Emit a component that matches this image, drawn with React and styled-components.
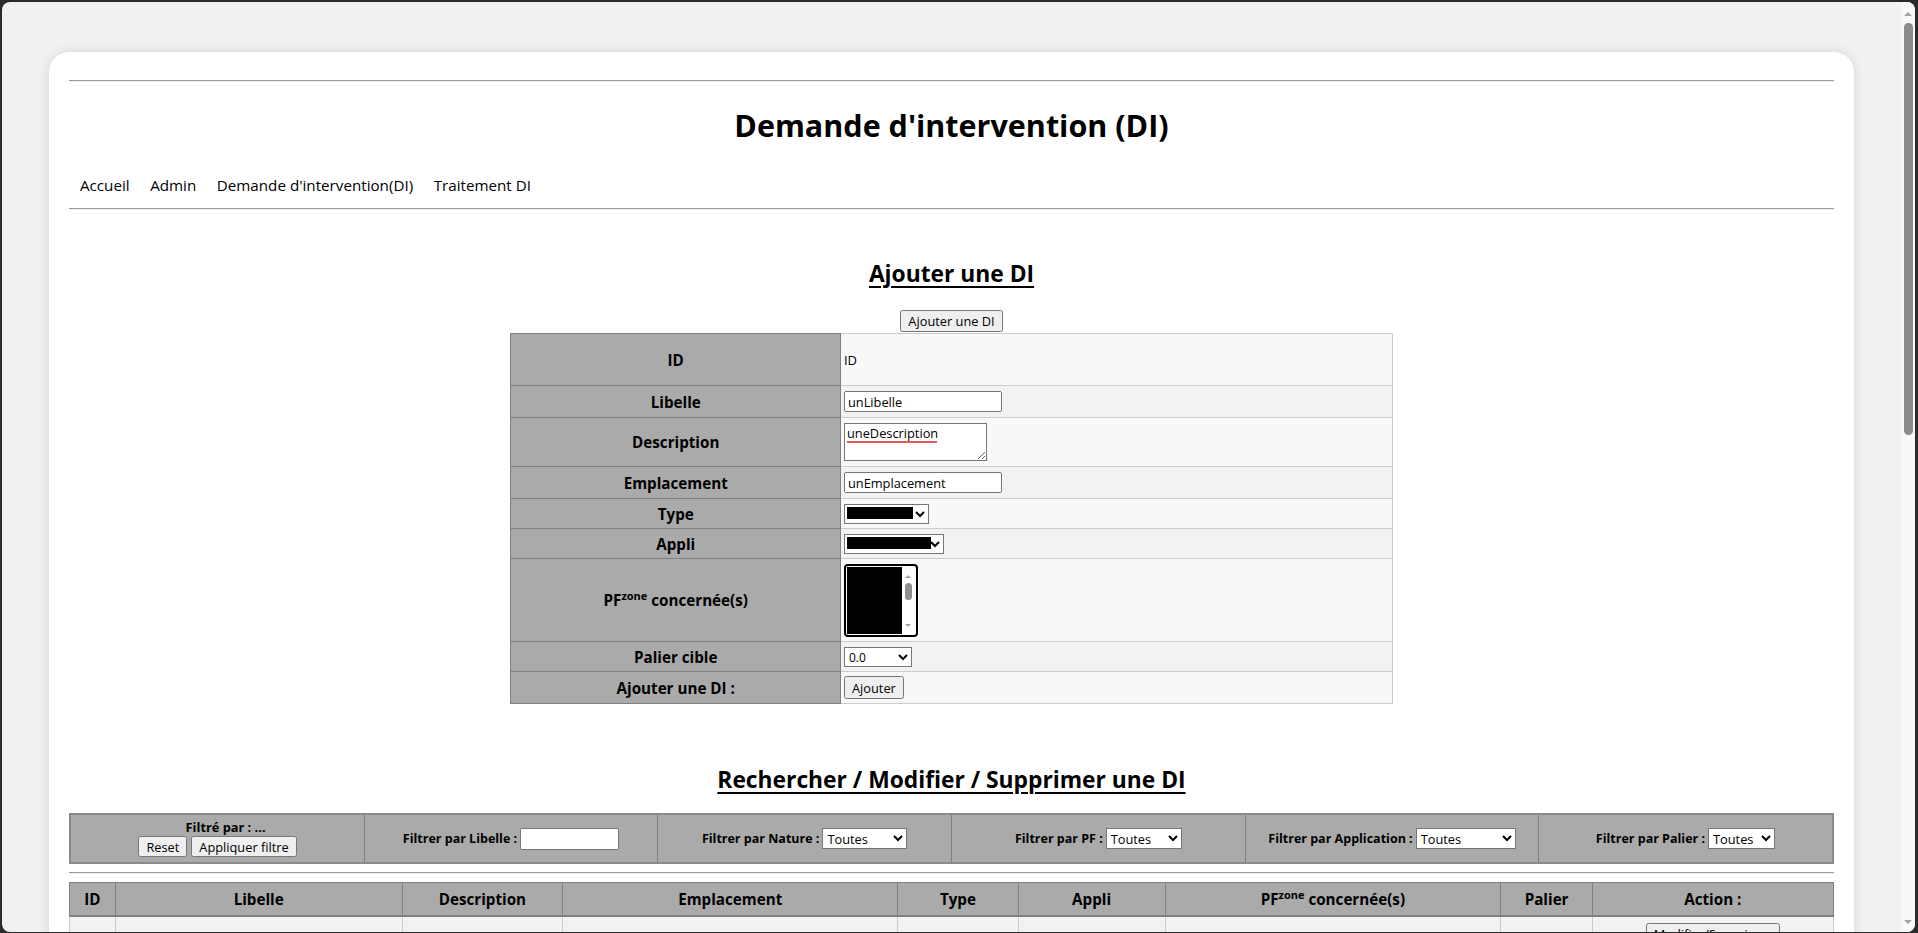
import React from "react";
import styled, { createGlobalStyle } from "styled-components";

const GlobalStyle = createGlobalStyle`
  html, body { margin: 0; padding: 0; height: 100%; overflow: hidden; background: #2b2b2b; }
  #root { height: 100%; }
  * { box-sizing: border-box; }
`;

const FONT = `"Open Sans", "Noto Sans", sans-serif`;

const Frame = styled.div`
  display: flex;
  height: 933px;
  padding: 2px 3px 1px 2px;
  background: #2b2b2b;
`;

const Window = styled.div`
  flex: 1;
  display: flex;
  border-radius: 8px;
  overflow: hidden;
  background: #f1f1f1;
`;

const Viewport = styled.main`
  flex: 1;
  min-width: 0;
  overflow: hidden;
  font-family: ${FONT};
  color: #000;
`;

/* page scrollbar (drawn, since the capture hides native scrollbars) */
const ScrollBar = styled.div`
  width: 14px;
  flex: none;
  display: flex;
  flex-direction: column;
  align-items: center;
  background: #f8f8f8;
`;

const Arrow = styled.div`
  flex: none;
  width: 0;
  height: 0;
  margin: ${(p) => p.$m};
  border-left: ${(p) => p.$s}px solid transparent;
  border-right: ${(p) => p.$s}px solid transparent;
  ${(p) =>
    p.$down
      ? `border-top: ${p.$s}px solid ${p.$c};`
      : `border-bottom: ${p.$s}px solid ${p.$c};`}
`;

const Track = styled.div`
  flex: 1;
  align-self: stretch;
  display: flex;
  justify-content: center;
  padding-top: ${(p) => p.$pt}px;
`;

const Thumb = styled.div`
  width: ${(p) => p.$w}px;
  height: ${(p) => p.$h}px;
  border-radius: ${(p) => p.$w}px;
  background: ${(p) => p.$c};
  margin-left: ${(p) => p.$ml || 0}px;
`;

const Card = styled.div`
  width: 95%;
  margin: 50px auto 50px;
  background: #fff;
  border-radius: 20px;
  box-shadow: 0 0 12px rgba(0, 0, 0, 0.12);
  padding: 28px 20px 30px;
`;

const Rule = styled.hr`
  margin: ${(p) => p.$m || "0"};
  height: 0;
  border: 0;
  border-top: 1px solid #9a9a9a;
  border-bottom: 1px solid #eeeeee;
`;

const Title = styled.h1`
  margin: 23px 0 0;
  font-size: 30.5px;
  line-height: 40px;
  font-weight: 700;
  text-align: center;
`;

const Nav = styled.nav`
  display: flex;
  margin-top: 30px;
  margin-bottom: 13px;
  line-height: 20px;
`;

const NavLink = styled.a`
  padding: 0 10px 0 10.5px;
  font-size: 15.2px;
  color: #000;
  text-decoration: none;
`;

const SectionTitle = styled.h2`
  margin: ${(p) => p.$top}px 0 0;
  font-size: 22.8px;
  line-height: 30px;
  font-weight: 700;
  text-align: center;
  text-decoration: underline;
  text-decoration-thickness: 2px;
  text-underline-offset: 4px;
`;

const Centered = styled.div`
  display: flex;
  justify-content: center;
  margin-top: 21px;
`;

const Button = styled.button`
  font-family: ${FONT};
  font-size: 12.8px;
  height: ${(p) => p.$h || 22}px;
  padding: 0 6px;
  color: #000;
`;

const FormTable = styled.table`
  width: 50%;
  margin: 1px auto 0;
  border-collapse: collapse;
  font-family: ${FONT};
`;

const FormRow = styled.tr`
  height: ${(p) => p.$h}px;
  &:nth-child(odd) td { background: #f8f8f8; }
  &:nth-child(even) td { background: #f2f2f2; }
`;

const LabelCell = styled.th`
  width: 37.4%;
  background: #aaaaaa;
  border: 1px solid #808080;
  font-size: 15.2px;
  font-weight: 700;
  text-align: center;
  vertical-align: middle;
  padding: 0 4px;
`;

const ValueCell = styled.td`
  border: 1px solid #cccccc;
  padding: 2px 3px;
  font-size: 13px;
  text-align: left;
  vertical-align: middle;
`;

const TextInput = styled.input`
  font-family: ${FONT};
  font-size: 12.8px;
  width: ${(p) => p.$w}px;
  height: ${(p) => p.$h || 21}px;
  padding: 1px 2px;
  vertical-align: middle;
`;

const TextArea = styled.textarea`
  display: block;
  font-family: ${FONT};
  font-size: 12.8px;
  line-height: 17px;
  width: 143px;
  height: 38px;
  padding: 1px 2px;
  background-color: #fff;
  background-image: linear-gradient(#e35a5a, #e35a5a);
  background-repeat: no-repeat;
  background-size: 90px 2px;
  background-position: 2px 17px;
`;

const Select = styled.select`
  font-family: ${FONT};
  font-size: ${(p) => p.$fs || 12.8}px;
  width: ${(p) => p.$w}px;
  height: ${(p) => p.$h || 20}px;
  vertical-align: middle;
  color: #000;
  background-color: #fff;
  ${(p) =>
    p.$black
      ? `
    background-image: linear-gradient(#000, #000);
    background-repeat: no-repeat;
    background-size: ${p.$black}px calc(100% - 6px);
    background-position: 2px 2px;
  `
      : ""}
`;

/* multi-select list box */
const ListBox = styled.div`
  display: flex;
  width: 74px;
  height: 73px;
  border: 2px solid #000;
  border-radius: 4px;
  background: #fff;
  padding: 1px;
`;

const ListItems = styled.div`
  flex: 1;
  background: #000;
`;

const ListScroll = styled.div`
  width: 13px;
  display: flex;
  flex-direction: column;
  align-items: center;
  background: #fff;
`;

const Sup = styled.sup`
  font-size: 11px;
  line-height: 0;
`;

const FilterTable = styled.table`
  width: 100%;
  margin-top: 18px;
  border-collapse: collapse;
  table-layout: fixed;
  border: 2px solid #8a8a8a;
`;

const FilterCell = styled.td`
  height: 49px;
  background: #aaaaaa;
  border: 1px solid #808080;
  text-align: center;
  vertical-align: middle;
  padding: 0 4px;
  font-size: 12.5px;
`;

const FilterLabel = styled.span`
  font-weight: 700;
  font-size: 12.5px;
  margin-right: 3px;
  vertical-align: middle;
`;

const FilterHint = styled.div`
  font-weight: 700;
  font-size: 12.8px;
  line-height: 14px;
  margin-bottom: 2px;
  padding-left: 16px;
`;

const ButtonRow = styled.div`
  display: flex;
  justify-content: center;
  gap: 4px;
`;

const ResultTable = styled.table`
  width: 100%;
  border-collapse: collapse;
  table-layout: fixed;
`;

const HeadCell = styled.th`
  width: ${(p) => p.$w}px;
  height: 33px;
  background: #aaaaaa;
  border: 1px solid #808080;
  border-bottom: 2px solid #808080;
  font-size: 15.2px;
  font-weight: 700;
  text-align: center;
  vertical-align: middle;
  padding: 0 4px;
`;

const DataRow = styled.tr`
  background: ${(p) => (p.$odd ? "#f8f8f8" : "#f2f2f2")};
`;

const DataCell = styled.td`
  border: 1px solid #cccccc;
  height: 33px;
  padding: 5px 4px;
  text-align: center;
  vertical-align: top;
`;

const columns = [
  ["ID", 45],
  ["Libelle", 287],
  ["Description", 160],
  ["Emplacement", 335],
  ["Type", 120],
  ["Appli", 147],
  ["PF", 335],
  ["Palier", 92],
  ["Action :", 240],
];

export default function App() {
  const rows = Array.from({ length: 30 }, (_, i) => i);
  return (
    <>
      <GlobalStyle />
      <Frame>
        <Window>
          <Viewport>
            <Card>
              <Rule />
              <Title>Demande d'intervention (DI)</Title>
              <Nav>
                <NavLink href="#">Accueil</NavLink>
                <NavLink href="#">Admin</NavLink>
                <NavLink href="#">Demande d'intervention(DI)</NavLink>
                <NavLink href="#">Traitement DI</NavLink>
              </Nav>
              <Rule />

              <SectionTitle $top={49}>Ajouter une DI</SectionTitle>
              <Centered>
                <Button>Ajouter une DI</Button>
              </Centered>
              <FormTable>
                <tbody>
                  <FormRow $h={52}>
                    <LabelCell>ID</LabelCell>
                    <ValueCell>ID</ValueCell>
                  </FormRow>
                  <FormRow $h={32}>
                    <LabelCell>Libelle</LabelCell>
                    <ValueCell>
                      <TextInput $w={158} defaultValue="unLibelle" />
                    </ValueCell>
                  </FormRow>
                  <FormRow $h={49}>
                    <LabelCell>Description</LabelCell>
                    <ValueCell>
                      <TextArea defaultValue="uneDescription" spellCheck={false} />
                    </ValueCell>
                  </FormRow>
                  <FormRow $h={32}>
                    <LabelCell>Emplacement</LabelCell>
                    <ValueCell>
                      <TextInput $w={158} defaultValue="unEmplacement" />
                    </ValueCell>
                  </FormRow>
                  <FormRow $h={30}>
                    <LabelCell>Type</LabelCell>
                    <ValueCell>
                      <Select $w={85} $black={66}>
                        <option value=""></option>
                      </Select>
                    </ValueCell>
                  </FormRow>
                  <FormRow $h={30}>
                    <LabelCell>Appli</LabelCell>
                    <ValueCell>
                      <Select $w={100} $black={84}>
                        <option value=""></option>
                      </Select>
                    </ValueCell>
                  </FormRow>
                  <FormRow $h={83}>
                    <LabelCell>
                      PF<Sup>zone</Sup> concernée(s)
                    </LabelCell>
                    <ValueCell>
                      <ListBox role="listbox" aria-multiselectable="true">
                        <ListItems />
                        <ListScroll>
                          <Arrow $s={3.5} $c="#a3a3a3" $m="8px 0 0" />
                          <Track $pt={5}>
                            <Thumb $w={7} $h={17} $c="#8f8f8f" />
                          </Track>
                          <Arrow $down $s={3.5} $c="#a3a3a3" $m="0 0 7px" />
                        </ListScroll>
                      </ListBox>
                    </ValueCell>
                  </FormRow>
                  <FormRow $h={30}>
                    <LabelCell>Palier cible</LabelCell>
                    <ValueCell>
                      <Select $w={68} $fs={12}>
                        <option>0.0</option>
                      </Select>
                    </ValueCell>
                  </FormRow>
                  <FormRow $h={32}>
                    <LabelCell>Ajouter une DI :</LabelCell>
                    <ValueCell>
                      <Button $h={23}>Ajouter</Button>
                    </ValueCell>
                  </FormRow>
                </tbody>
              </FormTable>

              <SectionTitle $top={61}>Rechercher / Modifier / Supprimer une DI</SectionTitle>
              <FilterTable>
                <tbody>
                  <tr>
                    <FilterCell>
                      <FilterHint>Filtré par : ...</FilterHint>
                      <ButtonRow>
                        <Button $h={21}>Reset</Button>
                        <Button $h={21}>Appliquer filtre</Button>
                      </ButtonRow>
                    </FilterCell>
                    <FilterCell>
                      <FilterLabel>Filtrer par Libelle :</FilterLabel>
                      <TextInput $w={99} $h={22} />
                    </FilterCell>
                    <FilterCell>
                      <FilterLabel>Filtrer par Nature :</FilterLabel>
                      <Select $w={85} $h={21}>
                        <option>Toutes</option>
                      </Select>
                    </FilterCell>
                    <FilterCell>
                      <FilterLabel>Filtrer par PF :</FilterLabel>
                      <Select $w={76} $h={21}>
                        <option>Toutes</option>
                      </Select>
                    </FilterCell>
                    <FilterCell>
                      <FilterLabel>Filtrer par Application :</FilterLabel>
                      <Select $w={100} $h={21}>
                        <option>Toutes</option>
                      </Select>
                    </FilterCell>
                    <FilterCell>
                      <FilterLabel>Filtrer par Palier :</FilterLabel>
                      <Select $w={67} $h={21}>
                        <option>Toutes</option>
                      </Select>
                    </FilterCell>
                  </tr>
                </tbody>
              </FilterTable>
              <Rule $m="8px 0" />
              <ResultTable>
                <thead>
                  <tr>
                    {columns.map(([name, w]) => (
                      <HeadCell key={name} $w={w}>
                        {name === "PF" ? (
                          <>
                            PF<Sup>zone</Sup> concernée(s)
                          </>
                        ) : (
                          name
                        )}
                      </HeadCell>
                    ))}
                  </tr>
                </thead>
                <tbody>
                  {rows.map((r) => (
                    <DataRow key={r} $odd={r % 2 === 1}>
                      {columns.slice(0, 8).map(([name]) => (
                        <DataCell key={name}></DataCell>
                      ))}
                      <DataCell>
                        <Button>Modifier/Supprimer</Button>
                      </DataCell>
                    </DataRow>
                  ))}
                </tbody>
              </ResultTable>
            </Card>
          </Viewport>
          <ScrollBar aria-hidden="true">
            <Arrow $s={4} $c="#a3a3a3" $m="10px 0 0" />
            <Track $pt={7}>
              <Thumb $w={9} $h={412} $c="#8b8b8b" $ml={1} />
            </Track>
            <Arrow $down $s={4} $c="#a3a3a3" $m="0 0 8px" />
          </ScrollBar>
        </Window>
      </Frame>
    </>
  );
}
